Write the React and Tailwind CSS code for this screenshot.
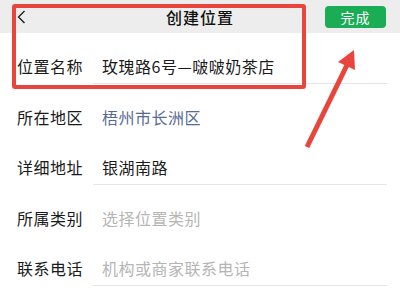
import React from 'react';

const rows = [
  { label: '位置名称', value: '玫瑰路6号—啵啵奶茶店', tone: 'text-[#1a1a1a]', line: true },
  { label: '所在地区', value: '梧州市长洲区', tone: 'text-[#576b95]', line: false },
  { label: '详细地址', value: '银湖南路', tone: 'text-[#1a1a1a]', line: true },
  { label: '所属类别', value: '选择位置类别', tone: 'text-[#b5b5b5]', line: false },
  { label: '联系电话', value: '机构或商家联系电话', tone: 'text-[#b5b5b5]', line: true },
];

export default function App() {
  return (
    <div
      className="relative w-[400px] h-[300px] overflow-hidden bg-white"
      style={{ fontFamily: '"Noto Sans CJK SC", "Noto Sans", sans-serif' }}
    >
      {/* Header */}
      <div className="grid grid-cols-3 items-center h-[33px] bg-[#ededed]">
        <div className="pl-[17px] flex items-center">
          <svg width="9" height="14" viewBox="0 0 9 14" fill="none">
            <path d="M7.5 1 L1.5 7 L7.5 13" stroke="#222" strokeWidth="1.4" />
          </svg>
        </div>
        <div className="text-center text-[16px] leading-[16px] tracking-[1px] font-medium text-[#111]">
          创建位置
        </div>
        <div className="flex justify-end pr-[14px]">
          <button className="w-[61px] h-[22px] rounded-[4px] bg-[#1aad55] text-white text-[14px] leading-[22px] tracking-[1px]">
            完成
          </button>
        </div>
      </div>

      {/* Form rows */}
      {rows.map((r) => (
        <div key={r.label} className="flex h-[50.5px]">
          <div className="w-[93px] pl-[17px] pt-[16px] flex items-center text-[16px] leading-[16px] tracking-[0.5px] text-[#1a1a1a]">
            {r.label}
          </div>
          <div
            className={`flex-1 mr-[13px] pl-[9px] pt-[16px] flex items-center text-[16px] leading-[16px] tracking-[0.5px] ${r.tone} ${
              r.line ? 'border-b border-[#e6e6e6]' : ''
            }`}
          >
            {r.value}
          </div>
        </div>
      ))}

      {/* Annotation: red box */}
      <div className="absolute left-[12px] top-[4px] w-[294px] h-[85px] border-[4px] border-[#e8453c] rounded-[3px]" />

      {/* Annotation: red arrow */}
      <svg className="absolute left-0 top-0" width="400" height="300" viewBox="0 0 400 300">
        <line x1="307" y1="147" x2="348" y2="63" stroke="#e8453c" strokeWidth="5" />
        <polygon points="354,50 355,70 338,62" fill="#e8453c" />
      </svg>
    </div>
  );
}
